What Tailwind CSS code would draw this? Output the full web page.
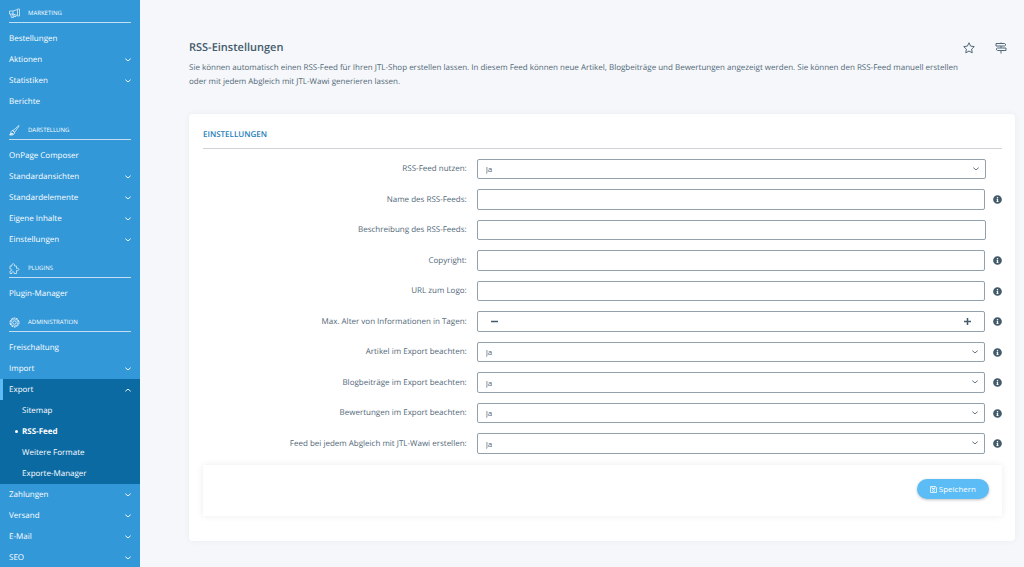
<!DOCTYPE html>
<html lang="de">
<head>
    <meta charset="UTF-8">
    <meta name="viewport" content="width=device-width, initial-scale=1.0">
    <title>RSS-Einstellungen</title>
    <script src="https://cdn.jsdelivr.net/npm/@tailwindcss/browser@4"></script>
</head>
<body class="bg-[#f5f7fa] text-[#526878] font-['Open_Sans',sans-serif] [text-rendering:geometricPrecision]">
    <!-- shared icons -->
    <svg class="hidden">
        <symbol id="chevron" viewBox="0 0 10 6"><path d="M1 1.200 L5 4.500 L9 1.200" fill="none" stroke="currentColor" stroke-width="1.500" stroke-linecap="round" stroke-linejoin="round"/></symbol>
        <symbol id="info" viewBox="0 0 512 512"><path fill="currentColor" fill-rule="evenodd" d="M256 8a248 248 0 1 0 0 496a248 248 0 1 0 0-496zM256 110a44 44 0 1 1 0 88a44 44 0 1 1 0-88zM204 224h88v128h24v44H196v-44h24v-84h-16z"/></symbol>
    </svg>
    <div class="flex min-h-screen">
        <nav class="w-[140px] h-screen sticky top-0 overflow-y-auto [scrollbar-width:none] shrink-0 bg-[#3298d8] text-white text-[8px] leading-[21px]">
            <section>
                <h2 class="flex items-center h-[23px] mx-[9px] pt-[4px] gap-2 border-b border-white/70 text-[6px] text-white">
                    <svg class="w-[11px] h-[11px]" viewBox="0 0 22 22" fill="none" stroke="currentColor" stroke-width="1.300"><path d="M1 6h7v6H1zM8 6l9-3v12l-9-3M17 2h4v14h-4M3 12l2 7h4l-2-7M10 13v4h4v-2"/></svg>
                    MARKETING
                </h2>
                <ul class="pt-[5px]">
                    <li class="px-[9px]"><a href="#" class="block">Bestellungen</a></li>
                    <li class="px-[9px]"><a href="#" class="flex items-center justify-between">Aktionen <svg class="w-[6px] h-[4px]"><use href="#chevron"/></svg></a></li>
                    <li class="px-[9px]"><a href="#" class="flex items-center justify-between">Statistiken <svg class="w-[6px] h-[4px]"><use href="#chevron"/></svg></a></li>
                    <li class="px-[9px]"><a href="#" class="block">Berichte</a></li>
                </ul>
            </section>
            <section class="pt-[5px]">
                <h2 class="flex items-center h-[23px] mx-[9px] pt-[4px] gap-2 border-b border-white/70 text-[6px] text-white">
                    <svg class="w-[11px] h-[11px]" viewBox="0 0 22 22" fill="none" stroke="currentColor" stroke-width="1.300"><path d="M20 1L8 11l3 4L20 2zM8 11c-4 0-4 3-5 6l-2 3c5 1 10 0 10-5z"/><path d="M2 19l4-3 2 2z" fill="currentColor"/></svg>
                    DARSTELLUNG
                </h2>
                <ul class="pt-[5px]">
                    <li class="px-[9px]"><a href="#" class="block">OnPage Composer</a></li>
                    <li class="px-[9px]"><a href="#" class="flex items-center justify-between">Standardansichten <svg class="w-[6px] h-[4px]"><use href="#chevron"/></svg></a></li>
                    <li class="px-[9px]"><a href="#" class="flex items-center justify-between">Standardelemente <svg class="w-[6px] h-[4px]"><use href="#chevron"/></svg></a></li>
                    <li class="px-[9px]"><a href="#" class="flex items-center justify-between">Eigene Inhalte <svg class="w-[6px] h-[4px]"><use href="#chevron"/></svg></a></li>
                    <li class="px-[9px]"><a href="#" class="flex items-center justify-between">Einstellungen <svg class="w-[6px] h-[4px]"><use href="#chevron"/></svg></a></li>
                </ul>
            </section>
            <section class="pt-[5px]">
                <h2 class="flex items-center h-[23px] mx-[9px] pt-[4px] gap-2 border-b border-white/70 text-[6px] text-white">
                    <svg class="w-[11px] h-[11px]" viewBox="0 0 22 22" fill="none" stroke="currentColor" stroke-width="1.300"><path d="M2 6h4c-2-6 7-6 5 0h4v5c6-3 7 6 0 4v6h-5c1-5-5-5-4 0H2v-5c5 1 5-5 0-4z"/></svg>
                    PLUGINS
                </h2>
                <ul class="pt-[5px]">
                    <li class="px-[9px]"><a href="#" class="block">Plugin-Manager</a></li>
                </ul>
            </section>
            <section class="pt-[5px]">
                <h2 class="flex items-center h-[23px] mx-[9px] pt-[4px] gap-2 border-b border-white/70 text-[6px] text-white">
                    <svg class="w-[11px] h-[11px]" viewBox="0 0 22 22" fill="none" stroke="currentColor"><circle cx="11" cy="11" r="9" stroke-width="2" stroke-dasharray="4 1.600"/><circle cx="11" cy="11" r="7" stroke-width="1.200"/><circle cx="11" cy="11" r="3.500" stroke-width="1.500"/></svg>
                    ADMINISTRATION
                </h2>
                <ul class="pt-[5px]">
                    <li class="px-[9px]"><a href="#" class="block">Freischaltung</a></li>
                    <li class="px-[9px]"><a href="#" class="flex items-center justify-between">Import <svg class="w-[6px] h-[4px]"><use href="#chevron"/></svg></a></li>
                    <li class="bg-[#0c6aa3]">
                        <a href="#" class="flex items-center justify-between border-l-3 border-[#5cbcf6] pl-[6px] pr-[9px]">Export <svg class="w-[6px] h-[4px] rotate-180"><use href="#chevron"/></svg></a>
                        <ul class="pl-[22px]">
                            <li><a href="#" class="block">Sitemap</a></li>
                            <li class="relative font-bold">
                                <span class="absolute -left-[7px] top-[9px] w-[3px] h-[3px] rounded-full bg-white"></span>
                                <a href="#" class="block">RSS-Feed</a>
                            </li>
                            <li><a href="#" class="block">Weitere Formate</a></li>
                            <li><a href="#" class="block">Exporte-Manager</a></li>
                        </ul>
                    </li>
                    <li class="px-[9px]"><a href="#" class="flex items-center justify-between">Zahlungen <svg class="w-[6px] h-[4px]"><use href="#chevron"/></svg></a></li>
                    <li class="px-[9px]"><a href="#" class="flex items-center justify-between">Versand <svg class="w-[6px] h-[4px]"><use href="#chevron"/></svg></a></li>
                    <li class="px-[9px]"><a href="#" class="flex items-center justify-between">E-Mail <svg class="w-[6px] h-[4px]"><use href="#chevron"/></svg></a></li>
                    <li class="px-[9px]"><a href="#" class="flex items-center justify-between">SEO <svg class="w-[6px] h-[4px]"><use href="#chevron"/></svg></a></li>
                </ul>
            </section>
        </nav>

        <main class="grow min-w-0 pl-[49px] pr-[9px] pt-10 pb-6">
            <header>
                <div class="flex items-center justify-between h-4 pr-2">
                    <h1 class="text-[11px] font-semibold text-[#435a6b]">RSS-Einstellungen</h1>
                    <div class="flex items-center gap-5">
                        <button type="button" aria-label="Favorit"><svg class="w-3 h-3" viewBox="0 0 24 24" fill="none" stroke="currentColor" stroke-width="2" stroke-linejoin="round"><path d="M12 1.500l3.200 6.700 7.300 1-5.300 5.100 1.300 7.300L12 18.100l-6.500 3.500 1.300-7.300L1.500 9.200l7.300-1z"/></svg></button>
                        <button type="button" aria-label="Tour"><svg class="w-3 h-3" viewBox="0 0 24 24" fill="none" stroke="currentColor" stroke-width="2"><path d="M2 3h17l3 2.500L19 8H2zM22 12H5l-3 2.500L5 17h17zM12 1v2M12 8v4M12 17v6"/></svg></button>
                    </div>
                </div>
                <p class="mt-[5px] pr-12 text-[8px] leading-[14px]">Sie können automatisch einen RSS-Feed für Ihren JTL-Shop erstellen lassen. In diesem Feed können neue Artikel, Blogbeiträge und Bewertungen angezeigt werden. Sie können den RSS-Feed manuell erstellen oder mit jedem Abgleich mit JTL-Wawi generieren lassen.</p>
            </header>

            <form class="mt-[25px] pl-[14px] pr-[13px] pt-[13px] pb-[25px] bg-white rounded-sm shadow-[0_0_6px_rgba(60,80,110,0.06)]">
                <h2 class="h-[21px] leading-4 text-[8px] font-semibold text-[#2380b8] border-b border-[#d0d3d5] box-content">EINSTELLUNGEN</h2>
                <div class="flex flex-col gap-[10px] mt-[10px] text-[8px]">
                    <div class="flex items-center h-5">
                        <label for="use" class="w-[33%] text-right">RSS-Feed nutzen:</label>
                        <div class="relative grow h-full ml-[10px] mr-4">
                            <select id="use" class="appearance-none w-full h-full px-2 border border-[#93a1ad] rounded-[2px]"><option>Ja</option><option>Nein</option></select>
                            <svg class="absolute right-[7px] top-2 w-[6px] h-[4px] pointer-events-none"><use href="#chevron"/></svg>
                        </div>
                    </div>
                    <div class="flex items-center h-[21px]">
                        <label for="name" class="w-[33%] text-right">Name des RSS-Feeds:</label>
                        <input id="name" type="text" class="grow h-full ml-[10px] mr-2 px-2 border border-[#93a1ad] rounded-[2px]">
                        <svg class="w-[9px] h-[9px] text-[#435a6b]"><use href="#info"/></svg>
                    </div>
                    <div class="flex items-center h-5">
                        <label for="desc" class="w-[33%] text-right">Beschreibung des RSS-Feeds:</label>
                        <input id="desc" type="text" class="grow h-full ml-[10px] mr-4 px-2 border border-[#93a1ad] rounded-[2px]">
                    </div>
                    <div class="flex items-center h-[21px]">
                        <label for="copyright" class="w-[33%] text-right">Copyright:</label>
                        <input id="copyright" type="text" class="grow h-full ml-[10px] mr-2 px-2 border border-[#93a1ad] rounded-[2px]">
                        <svg class="w-[9px] h-[9px] text-[#435a6b]"><use href="#info"/></svg>
                    </div>
                    <div class="flex items-center h-5">
                        <label for="logo" class="w-[33%] text-right">URL zum Logo:</label>
                        <input id="logo" type="text" class="grow h-full ml-[10px] mr-2 px-2 border border-[#93a1ad] rounded-[2px]">
                        <svg class="w-[9px] h-[9px] text-[#435a6b]"><use href="#info"/></svg>
                    </div>
                    <div class="flex items-center h-[21px]">
                        <label for="days" class="w-[33%] text-right">Max. Alter von Informationen in Tagen:</label>
                        <div class="flex items-center grow h-full ml-[10px] mr-2 px-[13px] border border-[#93a1ad] rounded-[2px] text-[#435a6b]">
                            <button type="button" aria-label="Weniger"><svg class="w-[7px] h-[7px]" viewBox="0 0 7 7"><path d="M0 3.500h7" stroke="currentColor" stroke-width="1.500"/></svg></button>
                            <input id="days" type="text" inputmode="numeric" class="grow min-w-0 text-center outline-none">
                            <button type="button" aria-label="Mehr"><svg class="w-[7px] h-[7px]" viewBox="0 0 7 7"><path d="M0 3.500h7M3.500 0v7" stroke="currentColor" stroke-width="1.500"/></svg></button>
                        </div>
                        <svg class="w-[9px] h-[9px] text-[#435a6b]"><use href="#info"/></svg>
                    </div>
                    <div class="flex items-center h-5">
                        <label for="article" class="w-[33%] text-right">Artikel im Export beachten:</label>
                        <div class="relative grow h-full ml-[10px] mr-2">
                            <select id="article" class="appearance-none w-full h-full px-2 border border-[#93a1ad] rounded-[2px]"><option>Ja</option><option>Nein</option></select>
                            <svg class="absolute right-[7px] top-2 w-[6px] h-[4px] pointer-events-none"><use href="#chevron"/></svg>
                        </div>
                        <svg class="w-[9px] h-[9px] text-[#435a6b]"><use href="#info"/></svg>
                    </div>
                    <div class="flex items-center h-[21px]">
                        <label for="blog" class="w-[33%] text-right">Blogbeiträge im Export beachten:</label>
                        <div class="relative grow h-full ml-[10px] mr-2">
                            <select id="blog" class="appearance-none w-full h-full px-2 border border-[#93a1ad] rounded-[2px]"><option>Ja</option><option>Nein</option></select>
                            <svg class="absolute right-[7px] top-2 w-[6px] h-[4px] pointer-events-none"><use href="#chevron"/></svg>
                        </div>
                        <svg class="w-[9px] h-[9px] text-[#435a6b]"><use href="#info"/></svg>
                    </div>
                    <div class="flex items-center h-5">
                        <label for="reviews" class="w-[33%] text-right">Bewertungen im Export beachten:</label>
                        <div class="relative grow h-full ml-[10px] mr-2">
                            <select id="reviews" class="appearance-none w-full h-full px-2 border border-[#93a1ad] rounded-[2px]"><option>Ja</option><option>Nein</option></select>
                            <svg class="absolute right-[7px] top-2 w-[6px] h-[4px] pointer-events-none"><use href="#chevron"/></svg>
                        </div>
                        <svg class="w-[9px] h-[9px] text-[#435a6b]"><use href="#info"/></svg>
                    </div>
                    <div class="flex items-center h-[21px]">
                        <label for="sync" class="w-[33%] text-right">Feed bei jedem Abgleich mit JTL-Wawi erstellen:</label>
                        <div class="relative grow h-full ml-[10px] mr-2">
                            <select id="sync" class="appearance-none w-full h-full px-2 border border-[#93a1ad] rounded-[2px]"><option>Ja</option><option>Nein</option></select>
                            <svg class="absolute right-[7px] top-2 w-[6px] h-[4px] pointer-events-none"><use href="#chevron"/></svg>
                        </div>
                        <svg class="w-[9px] h-[9px] text-[#435a6b]"><use href="#info"/></svg>
                    </div>
                </div>
                <div class="flex justify-end mt-[11px] px-[13px] pt-[14px] pb-[17px] bg-white shadow-[0_0_7px_rgba(0,0,0,0.08)]">
                    <button type="submit" class="flex items-center gap-[2px] h-5 px-[13px] rounded-full bg-[#5cbcf6] text-white text-[8px] shadow-[0_1px_3px_rgba(0,0,0,0.25)]">
                        <svg class="w-[7px] h-[7px]" viewBox="0 0 14 14" fill="none" stroke="currentColor" stroke-width="1.500"><path d="M1 1h10l2 2v10H1zM4 1v4h6V1"/><circle cx="7" cy="9" r="2"/></svg>
                        Speichern
                    </button>
                </div>
            </form>
        </main>
    </div>
</body>
</html>
